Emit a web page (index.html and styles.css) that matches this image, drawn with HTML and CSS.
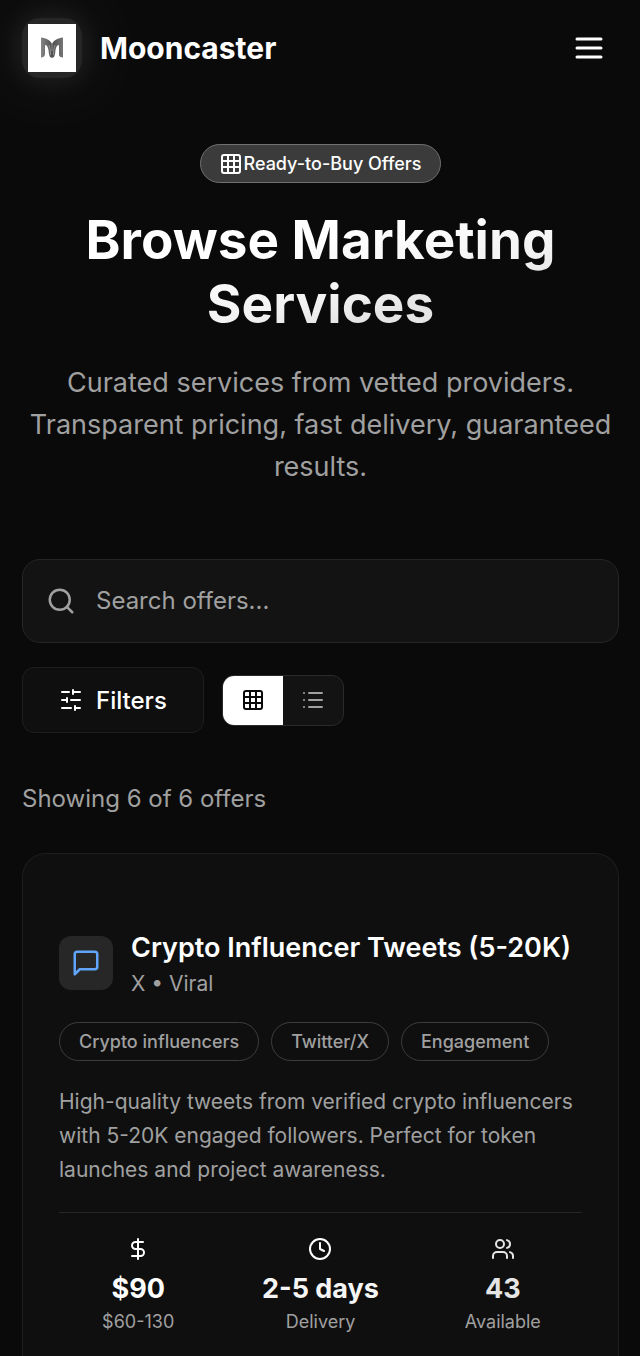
FILE: index.html
```html
<!DOCTYPE html>
<html lang="en">
<head>
<meta charset="utf-8">
<meta name="viewport" content="width=device-width, initial-scale=1">
<title>Mooncaster – Browse Marketing Services</title>
<link rel="stylesheet" href="styles.css">
</head>
<body>
<svg class="sprite" aria-hidden="true">
  <symbol id="grid" viewBox="0 0 24 24"><rect x="3" y="3" width="18" height="18" rx="2"/><path d="M3 9h18M3 15h18M9 3v18M15 3v18"/></symbol>
</svg>
<div class="page">
  <header class="header">
    <a class="brand" href="#">
      <span class="logo">
        <svg viewBox="0 0 48 48" aria-hidden="true">
          <defs><linearGradient id="mark" x1="0" x2="1"><stop offset="0" stop-color="#858585"/><stop offset=".5" stop-color="#505050"/><stop offset="1" stop-color="#757575"/></linearGradient></defs>
          <path fill="url(#mark)" d="M13 13.500c5 .5 9 2.500 11 6.500 2-4 6-6 11-6.500V33.500c-2.500 0-4-1-4-3V21c-2 0-3 2-3.500 5-.3 3-.5 5-1.500 7-.8 1-3.200 1-4 0-1-2-1.200-4-1.500-7-.5-3-1.500-5-3.500-5v9.500c-.5 2-1.500 3-4 3z"/>
          <path fill="none" stroke="#aaa" stroke-width=".7" d="M24 20v7M21 21c1 3 1.500 6 1.500 10M27 21c-1 3-1.500 6-1.500 10"/>
        </svg>
      </span>
      <span class="brand-name">Mooncaster</span>
    </a>
    <button class="menu" type="button" aria-label="Open menu">
      <svg class="icon icon-xl" viewBox="0 0 24 24"><path d="M4 6h16M4 12h16M4 18h16"/></svg>
    </button>
  </header>
  <main class="main">
    <section class="hero">
      <span class="badge"><svg class="icon"><use href="#grid"/></svg>Ready-to-Buy Offers</span>
      <h1 class="title">Browse Marketing Services</h1>
      <p class="lead">Curated services from vetted providers. Transparent pricing, fast delivery, guaranteed results.</p>
    </section>
    <label class="search">
      <svg class="icon icon-lg" viewBox="0 0 24 24"><circle cx="11" cy="11" r="8"/><path d="m21 21-4.3-4.3"/></svg>
      <input class="search-input" type="search" placeholder="Search offers..." aria-label="Search offers">
    </label>
    <div class="toolbar">
      <button class="filters" type="button">
        <svg class="icon" viewBox="0 0 24 24"><path d="M21 4h-7M10 4H3M21 12h-9M8 12H3M21 20h-5M12 20H3M14 2v4M8 10v4M16 18v4"/></svg>
        Filters
      </button>
      <div class="views" role="group" aria-label="View">
        <button class="view view-on" type="button" aria-label="Grid view" aria-pressed="true"><svg class="icon"><use href="#grid"/></svg></button>
        <button class="view" type="button" aria-label="List view" aria-pressed="false"><svg class="icon" viewBox="0 0 24 24"><path d="M8 5h13M8 12h13M8 19h13M3 5h.01M3 12h.01M3 19h.01"/></svg></button>
      </div>
    </div>
    <p class="count">Showing 6 of 6 offers</p>
    <article class="card">
      <div class="card-head">
        <span class="tile"><svg class="icon icon-lg" viewBox="0 0 24 24"><path d="M21 15a2 2 0 0 1-2 2H7l-4 4V5a2 2 0 0 1 2-2h14a2 2 0 0 1 2 2z"/></svg></span>
        <div class="card-titles">
          <h2 class="card-title">Crypto Influencer Tweets (5-20K)</h2>
          <p class="card-sub">X • Viral</p>
        </div>
      </div>
      <ul class="tags">
        <li class="tag">Crypto influencers</li>
        <li class="tag">Twitter/X</li>
        <li class="tag">Engagement</li>
      </ul>
      <p class="desc">High-quality tweets from verified crypto influencers with 5-20K engaged followers. Perfect for token launches and project awareness.</p>
      <div class="stats">
        <div class="stat">
          <svg class="icon" viewBox="0 0 24 24"><path d="M12 2v20M17 5H9.500a3.500 3.500 0 0 0 0 7h5a3.500 3.500 0 0 1 0 7H6"/></svg>
          <strong class="value">$90</strong><span class="note">$60-130</span>
        </div>
        <div class="stat">
          <svg class="icon" viewBox="0 0 24 24"><circle cx="12" cy="12" r="10"/><path d="M12 6v6l4 2"/></svg>
          <strong class="value value-mid">2-5 days</strong><span class="note">Delivery</span>
        </div>
        <div class="stat stat-dim">
          <svg class="icon" viewBox="0 0 24 24"><path d="M16 21v-2a4 4 0 0 0-4-4H6a4 4 0 0 0-4 4v2"/><circle cx="9" cy="7" r="4"/><path d="M22 21v-2a4 4 0 0 0-3-3.870M16 3.130a4 4 0 0 1 0 7.750"/></svg>
          <strong class="value">43</strong><span class="note">Available</span>
        </div>
      </div>
    </article>
  </main>
</div>
</body>
</html>
```
FILE: styles.css
```css
* { box-sizing: border-box; }
body {
  margin: 0;
  background: #0a0a0a;
  color: #fff;
  font-family: Inter, "Liberation Sans", sans-serif;
  font-optical-sizing: none;
}
h1, h2, p, ul { margin: 0; padding: 0; }
button, input { font: inherit; color: inherit; }
button { padding: 0; border: 0; background: none; cursor: pointer; }
.sprite { position: absolute; width: 0; height: 0; }
.icon {
  display: block;
  flex: none;
  width: 24px;
  height: 24px;
  fill: none;
  stroke: currentColor;
  stroke-width: 2;
  stroke-linecap: round;
  stroke-linejoin: round;
}
.icon-lg { width: 30px; height: 30px; }
.icon-xl { width: 36px; height: 36px; }
.page { display: flex; flex-direction: column; min-height: 100vh; overflow: hidden; }
.header {
  display: flex;
  align-items: center;
  justify-content: space-between;
  height: 96px;
  padding: 0 33px 0 22px;
}
.brand { display: flex; align-items: center; gap: 18px; color: inherit; text-decoration: none; }
.logo {
  width: 60px;
  height: 60px;
  padding: 6px;
  border-radius: 18px;
  background: #262626;
  box-shadow: 0 0 30px rgba(255, 255, 255, .1), 0 0 90px rgba(255, 255, 255, .12);
}
.logo svg { display: block; background: #fff; }
.brand-name { font-size: 30px; font-weight: 700; line-height: 36px; }
.main { flex: 1; display: flex; flex-direction: column; padding: 48px 21px 0 22px; }
.hero { display: flex; flex-direction: column; align-items: center; text-align: center; }
.badge {
  display: flex;
  align-items: center;
  height: 39px;
  padding: 0 18px;
  border: 1px solid #707070;
  border-radius: 20px;
  background: #3b3b3b;
  font-size: 18px;
  font-weight: 500;
}
.title {
  margin-top: 25px;
  font-size: 53px;
  font-weight: 700;
  line-height: 64px;
  background: linear-gradient(to bottom right, #fff 35%, #f3f3f3 60%, #e4e4e4 72%);
  background-clip: text;
  -webkit-background-clip: text;
  color: transparent;
}
.lead { margin-top: 26px; font-size: 27px; line-height: 42px; color: #a0a0a0; }
.search {
  display: flex;
  align-items: center;
  gap: 20px;
  height: 84px;
  margin-top: 71px;
  padding: 0 23px;
  border: 1px solid #262626;
  border-radius: 18px;
  background: #131313;
  color: #a0a0a0;
}
.search-input { flex: 1; min-width: 0; padding: 0; border: 0; outline: 0; background: none; font-size: 24px; line-height: 36px; }
.search-input::placeholder { color: #a0a0a0; opacity: 1; }
.toolbar { display: flex; align-items: center; gap: 18px; margin-top: 24px; }
.filters {
  display: flex;
  align-items: center;
  gap: 13px;
  height: 66px;
  padding: 0 36px;
  border: 1px solid #1e1e1e;
  border-radius: 12px;
  background: #0f0f0f;
  font-size: 24px;
  font-weight: 500;
}
.views { display: flex; height: 51px; border: 1px solid #2a2a2a; border-radius: 12px; background: #131313; overflow: hidden; }
.view { display: grid; place-items: center; width: 60px; color: #a0a0a0; }
.view-on { background: #fff; color: #0a0a0a; }
.count { margin-top: 48px; font-size: 24px; line-height: 36px; color: #a0a0a0; }
.card {
  flex: 1;
  margin-top: 36px;
  padding: 73px 36px 24px;
  border: 1px solid #1e1e1e;
  border-bottom: 0;
  border-radius: 24px 24px 0 0;
  background: #0f0f0f;
}
.card-head { display: flex; align-items: center; gap: 18px; }
.tile { display: grid; place-items: center; flex: none; width: 54px; height: 54px; border-radius: 12px; background: #272727; color: #60a5fa; }
.card-title { font-size: 27px; font-weight: 600; line-height: 42px; }
.card-sub { font-size: 21px; line-height: 30px; color: #a0a0a0; }
.tags { display: flex; flex-wrap: wrap; gap: 12px; margin-top: 23px; list-style: none; }
.tag { padding: 0 19px; border: 1px solid #3d3d3d; border-radius: 20px; font-size: 18px; font-weight: 500; line-height: 37px; color: #a0a0a0; }
.desc { margin-top: 24px; font-size: 21px; line-height: 34px; color: #a0a0a0; }
.stats { display: grid; grid-template-columns: repeat(3, 1fr); gap: 24px; margin-top: 25px; padding-top: 24px; border-top: 1px solid #272727; }
.stat { display: flex; flex-direction: column; align-items: center; }
.stat-dim { color: #e5e5e5; }
.value { margin-top: 7px; font-size: 27px; font-weight: 700; line-height: 42px; }
.value-mid { color: #f5f5f5; }
.note { font-size: 18px; line-height: 24px; color: #a0a0a0; }
```
